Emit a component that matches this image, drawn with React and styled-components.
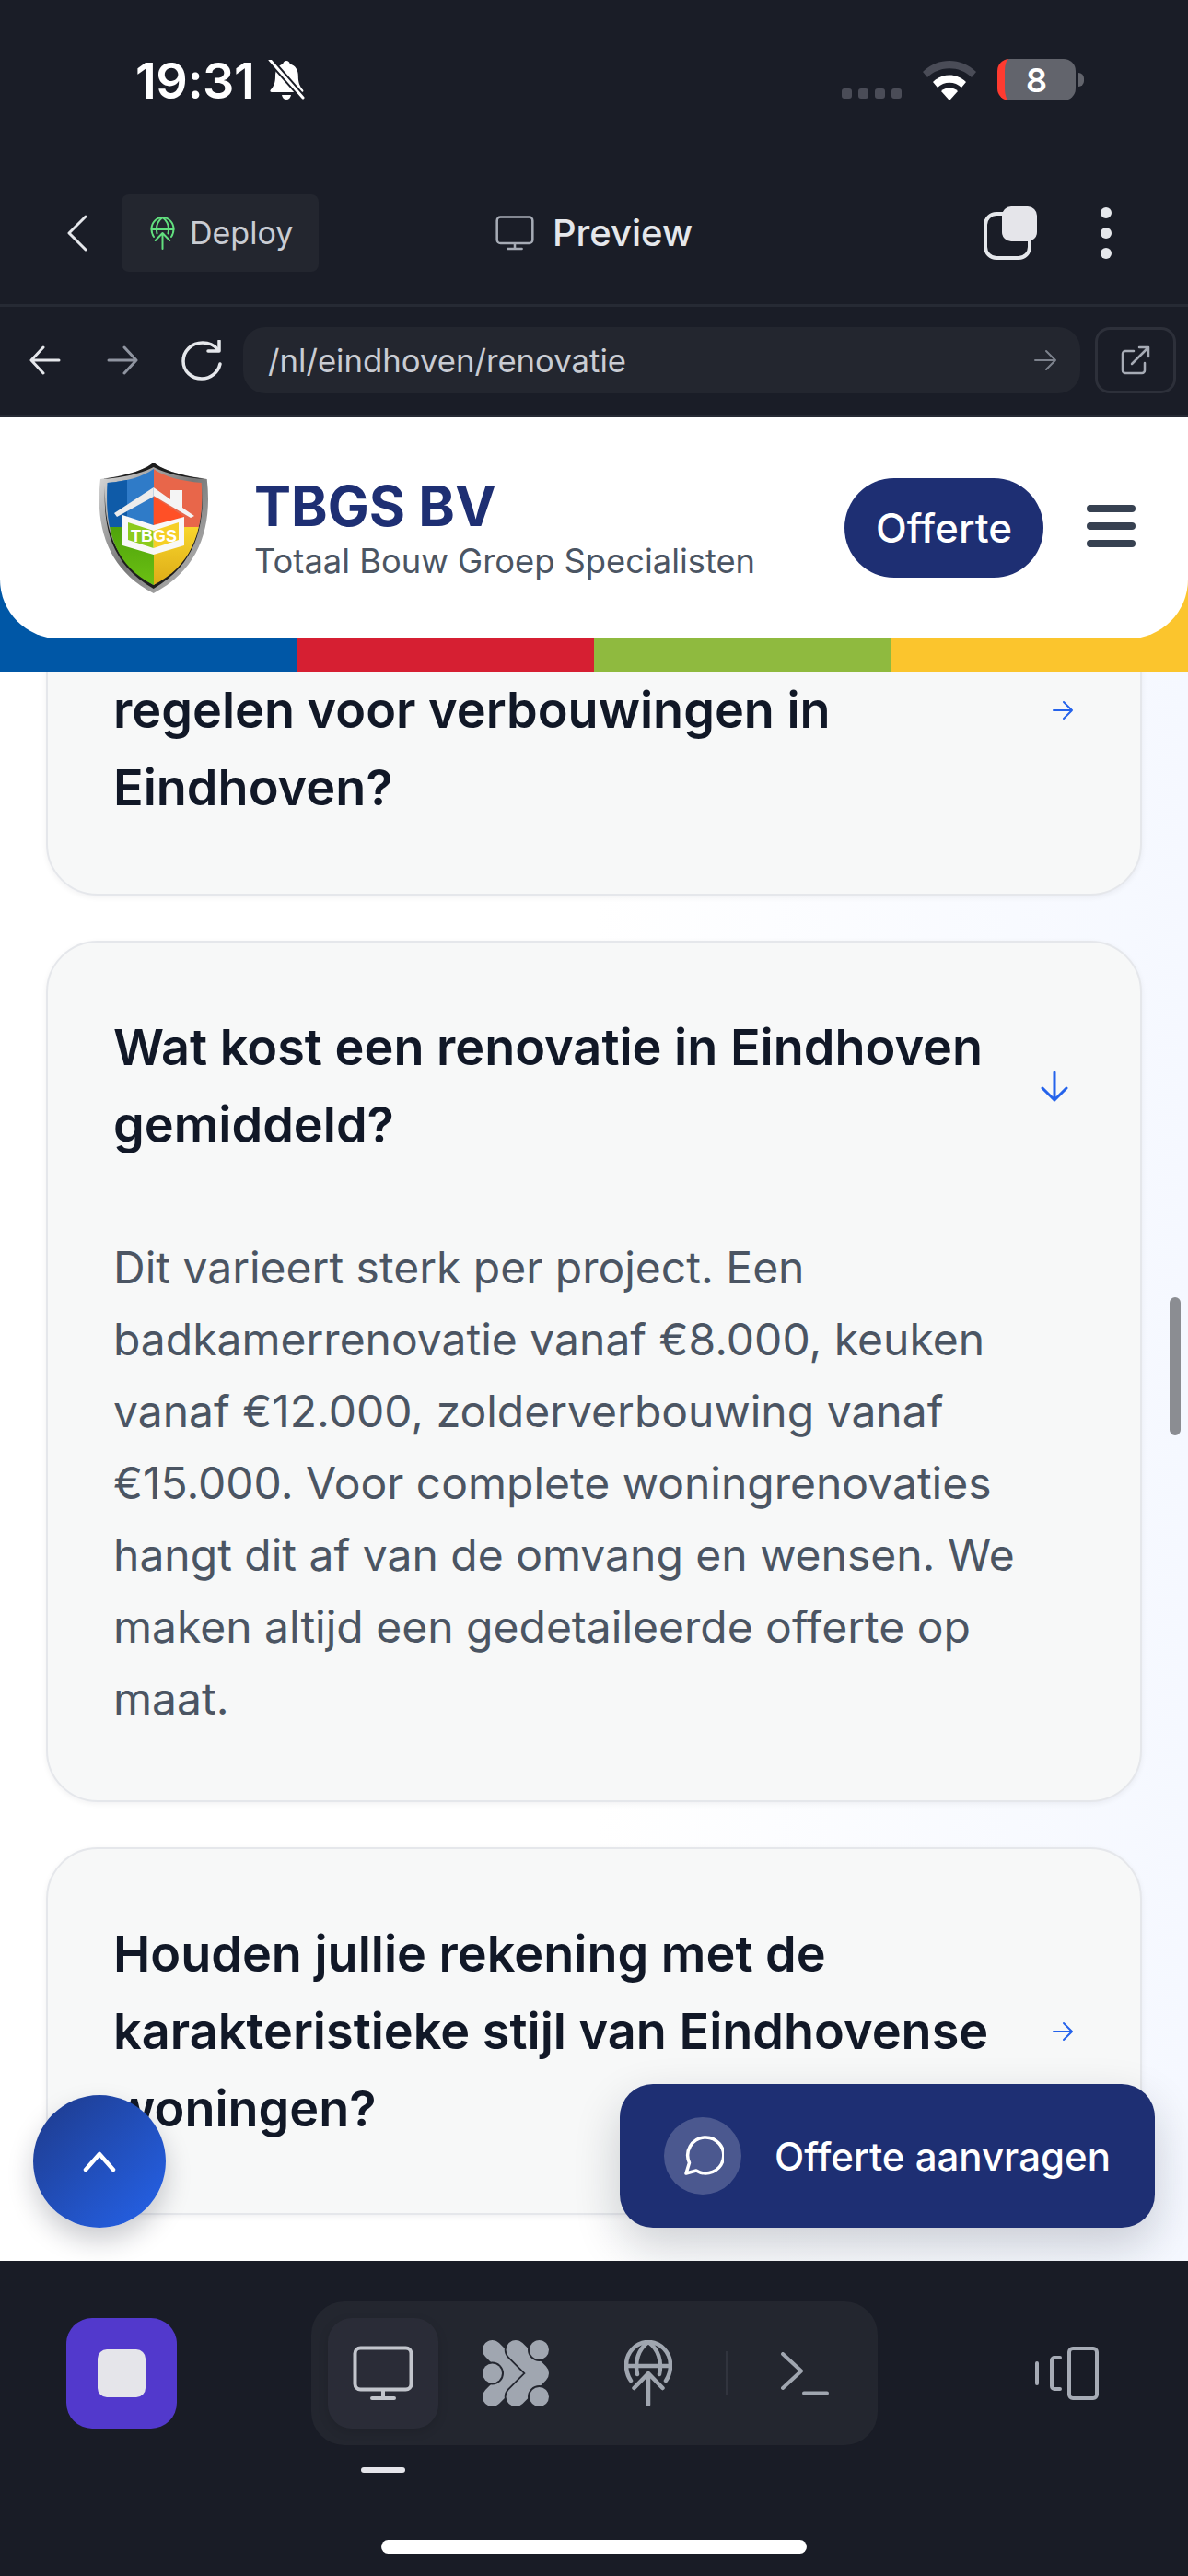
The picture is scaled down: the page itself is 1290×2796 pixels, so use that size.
import React from 'react';
import styled, { createGlobalStyle } from 'styled-components';

const GlobalStyle = createGlobalStyle`
    html, body {
        margin: 0;
        padding: 0;
        background: #1a1d27;
    }
    * {
        box-sizing: border-box;
    }
`

const BellOff = () => (
    <svg width="42" height="44" viewBox="1 1 40 44">
        <path d="M21 2c2 0 3.500 1.500 3.800 3.500 6 1.500 9 6.500 9 13 0 7 1.500 11 5.200 15 1 1.200.2 2.500-1.200 2.500H5c-1.400 0-2.200-1.300-1.200-2.500 3.700-4 5.200-8 5.200-15 0-6.500 3-11.500 8.200-13C17.500 3.500 19 2 21 2z" fill="#fff" />
        <path d="M16 39h10c-.5 3-2.500 5-5 5s-4.500-2-5-5z" fill="#fff" />
        <path d="M3 1l36 41" stroke="#1a1d27" strokeWidth="7" />
        <path d="M3 1l36 41" stroke="#fff" strokeWidth="3" strokeLinecap="round" />
    </svg>
)

const Wifi = () => (
    <svg width="58" height="44" viewBox="0 0 58 44">
        <path d="M0 13C16-3 42-3 58 13l-5 6C40 6 18 6 5 19z" fill="#4a4c57" />
        <path d="M11 24c10-10 26-10 36 0l-5 6c-7-7-19-7-26 0z" fill="#fff" />
        <path d="M20 34c5-5 13-5 18 0l-9 10z" fill="#fff" />
    </svg>
)

const GlobeUp = ({ w, h, color, width }) => (
    <svg width={w} height={h} viewBox="0 0 52 72" fill="none" stroke={color} strokeWidth={width} strokeLinecap="round" strokeLinejoin="round">
        <path d="M7 44C3.500 39 2 33 2 27 2 13 13 2 26 2s24 11 24 25c0 6-1.500 12-5 17" />
        <path d="M14 37C11 23 15 10 26 2c11 8 15 21 12 35" />
        <path d="M2 28h48" />
        <path d="M26 38v32M10.500 52L26 36l15.500 16" />
    </svg>
)

const Monitor = ({ w, h, color, width }) => (
    <svg width={w} height={h} viewBox="0 0 66 60" fill="none" stroke={color} strokeWidth={width} strokeLinecap="round" strokeLinejoin="round">
        <rect x="2.500" y="2.500" width="61" height="45" rx="6" />
        <path d="M33 48v9M21 57h24" />
    </svg>
)

// two chevron bands, the loose blobs sit on top with a halo in the panel colour
const Network = () => (
    <svg width="72" height="72" viewBox="0 0 72 72" fill="#a0a6b0" strokeLinecap="round" strokeLinejoin="round">
        <path d="M10.500 10.500L36 36 10.500 61.500" fill="none" stroke="#a0a6b0" strokeWidth="21" />
        <path d="M36 10.500L61.500 36 36 61.500" fill="none" stroke="#23262f" strokeWidth="24.500" />
        <path d="M36 10.500L61.500 36 36 61.500" fill="none" stroke="#a0a6b0" strokeWidth="21" />
        <circle cx="10.500" cy="36" r="10.500" stroke="#23262f" strokeWidth="4" paintOrder="stroke" />
        <circle cx="61.500" cy="10.500" r="10.500" stroke="#23262f" strokeWidth="4" paintOrder="stroke" />
        <circle cx="61.500" cy="61.500" r="10.500" stroke="#23262f" strokeWidth="4" paintOrder="stroke" />
    </svg>
)

const Shield = () => (
    <svg width="118" height="142" viewBox="0 0 118 142">
        <defs>
            <linearGradient id="rim" x1="0" y1="0" x2="1" y2="1">
                <stop offset="0" stopColor="#e2e2e2" />
                <stop offset="0.5" stopColor="#777" />
                <stop offset="1" stopColor="#c4c4c4" />
            </linearGradient>
            <linearGradient id="sun" x1="0" y1="0" x2="0" y2="1">
                <stop offset="0" stopColor="#f8d62c" />
                <stop offset="1" stopColor="#d9a514" />
            </linearGradient>
            <linearGradient id="leaf" x1="0" y1="0" x2="0" y2="1">
                <stop offset="0" stopColor="#4fa30b" />
                <stop offset="1" stopColor="#6fc414" />
            </linearGradient>
            <clipPath id="inner">
                <path d="M58.700 7c13 9 30 13 52 15 3 45-6 88-52 111C13 110 6 67 8.700 22c22-2 37-6 50-15z" />
            </clipPath>
        </defs>
        <path d="M58.700 0c13 10 32 14 58 18 6 52-8 98-58 124C9 116-5 70 1 18 27 14 46 10 58.700 0z" fill="url(#rim)" />
        <path d="M58.700 0c13 10 32 14 55 18-24-2-42-6-55-13-13 7-31 11-55 13C27 14 46 10 58.700 0z" fill="#1d1d1d" />
        <path d="M6 26c-2 44 6 84 52.700 111 46-27 55-67 53-111 1 44-8 80-53 107C14 106 5 70 6 26z" fill="#1d1d1d" />
        <g clipPath="url(#inner)">
            <rect x="0" y="0" width="59" height="70" fill="#2f7bc8" />
            <rect x="0" y="0" width="30" height="70" fill="#0f5ba8" />
            <rect x="59" y="0" width="59" height="70" fill="#e8664a" />
            <rect x="0" y="70" width="59" height="72" fill="url(#leaf)" />
            <rect x="59" y="70" width="59" height="72" fill="url(#sun)" />
        </g>
        <path d="M58.700 27L77 40V30h13v19l13 9-4 2-40.300-24z" fill="#f4f4f4" />
        <path d="M58.700 27v10L19 59l-3-4z" fill="#ececec" />
        <path d="M58.700 37L92 59 58.700 68z" fill="#ff5026" />
        <path d="M25 57l33.700 11L92 59v31l-33.300 10L25 90z" fill="#f8f8f8" />
        <path d="M31 65l27.700 9v19L31 84z" fill="#8ccb1d" />
        <path d="M58.700 74L86 65v19l-27.300 9z" fill="#f6cf27" />
        <text x="59" y="86" textAnchor="middle" fontFamily="Liberation Sans, sans-serif" fontWeight="700" fontSize="19" fill="#fff" textLength="50" lengthAdjust="spacingAndGlyphs">TBGS</text>
    </svg>
)

const Thin = ({ w, h, color, stroke, d }) => (
    <svg width={w} height={h} viewBox={`0 0 ${w} ${h}`} fill="none" stroke={color} strokeWidth={stroke} strokeLinecap="round" strokeLinejoin="round">
        <path d={d} />
    </svg>
)

const App = () => {
    return (
        <Page>
            <GlobalStyle />
            <StatusBar>
                <Clock>
                    <Time>19:31</Time>
                    <BellOff />
                </Clock>
                <StatusRight>
                    <Signal>
                        <SignalDot /><SignalDot /><SignalDot /><SignalDot />
                    </Signal>
                    <Wifi />
                    <Battery>
                        <BatteryBody>8</BatteryBody>
                        <BatteryNub />
                    </Battery>
                </StatusRight>
            </StatusBar>

            <TopBar>
                <TopLeft>
                    <Thin w={24} h={40} color="#e5e7eb" stroke={3} d="M21 2L3 20l18 18" />
                    <DeployChip>
                        <GlobeUp w={27} h={36} color="#62e07f" width={4} />
                        <DeployLabel>Deploy</DeployLabel>
                    </DeployChip>
                </TopLeft>
                <TopCenter>
                    <Monitor w={42} h={38} color="#a6abb5" width={4} />
                    <PreviewLabel>Preview</PreviewLabel>
                </TopCenter>
                <TopRight>
                    <Tabs>
                        <TabBack />
                        <TabFront />
                    </Tabs>
                    <MoreDots>
                        <MoreDot /><MoreDot /><MoreDot />
                    </MoreDots>
                </TopRight>
            </TopBar>

            <UrlBar>
                <Thin w={34} h={32} color="#e5e7eb" stroke={3} d="M32 16H3M15 2L2 16l13 14" />
                <ForwardSlot>
                    <Thin w={34} h={32} color="#8f94a0" stroke={3} d="M2 16h29M19 2l13 14-13 14" />
                </ForwardSlot>
                <ReloadSlot>
                    <svg width="46" height="44" viewBox="0 0 46 44" fill="none" stroke="#e5e7eb" strokeWidth="3.500" strokeLinecap="round" strokeLinejoin="round">
                        <path d="M40 10C36 5 30 3 24 3 12 3 3 12 3 23s9 19 20 19c10 0 18-7 20-16" />
                        <path d="M42 1v11H30" />
                    </svg>
                </ReloadSlot>
                <UrlPill>
                    <UrlText>/nl/eindhoven/renovatie</UrlText>
                    <Thin w={26} h={24} color="#7d828d" stroke={2} d="M2 12h22M14 2l10 10-10 10" />
                </UrlPill>
                <OpenButton>
                    <svg width="32" height="32" viewBox="0 0 32 32" fill="none" stroke="#a6abb5" strokeWidth="2.500" strokeLinecap="round" strokeLinejoin="round">
                        <path d="M14 6H5a3 3 0 0 0-3 3v18a3 3 0 0 0 3 3h18a3 3 0 0 0 3-3v-8" />
                        <path d="M12 20L30 2M20 2h10v10" />
                    </svg>
                </OpenButton>
            </UrlBar>

            <SiteHeader>
                <SiteHeaderInner>
                    <Brand>
                        <Shield />
                        <BrandText>
                            <BrandName>TBGS BV</BrandName>
                            <BrandSub>Totaal Bouw Groep Specialisten</BrandSub>
                        </BrandText>
                    </Brand>
                    <HeaderActions>
                        <QuoteButton>Offerte</QuoteButton>
                        <Burger>
                            <BurgerBar /><BurgerBar /><BurgerBar />
                        </Burger>
                    </HeaderActions>
                </SiteHeaderInner>
            </SiteHeader>

            <Content>
                <FaqList>
                    <FaqCard $bottom={73}>
                        <FaqRow>
                            <FaqTitle>{'\u00a0'}<br />regelen voor verbouwingen in<br />Eindhoven?</FaqTitle>
                            <Thin w={24} h={22} color="#2563eb" stroke={2} d="M2 11h20M13 2l9 9-9 9" />
                        </FaqRow>
                    </FaqCard>
                    <FaqCard>
                        <FaqRow>
                            <FaqTitle>Wat kost een renovatie in Eindhoven gemiddeld?</FaqTitle>
                            <DownSlot>
                                <Thin w={32} h={34} color="#2563eb" stroke={3} d="M16 2v30M3 19l13 13 13-13" />
                            </DownSlot>
                        </FaqRow>
                        <FaqBody>Dit varieert sterk per project. Een badkamerrenovatie vanaf €8.000, keuken vanaf €12.000, zolderverbouwing vanaf €15.000. Voor complete woningrenovaties hangt dit af van de omvang en wensen. We maken altijd een gedetaileerde offerte op maat.</FaqBody>
                    </FaqCard>
                    <FaqCard>
                        <FaqRow>
                            <FaqTitle>Houden jullie rekening met de karakteristieke stijl van Eindhovense woningen?</FaqTitle>
                            <Thin w={24} h={22} color="#2563eb" stroke={2} d="M2 11h20M13 2l9 9-9 9" />
                        </FaqRow>
                    </FaqCard>
                </FaqList>
                <ScrollThumb />
                <ScrollTop>
                    <Thin w={36} h={24} color="#fff" stroke={4.500} d="M3 21L18 4l15 17" />
                </ScrollTop>
                <ChatButton>
                    <ChatIcon>
                        <svg width="46" height="46" viewBox="0 0 46 46" fill="none" stroke="#fff" strokeWidth="3.500" strokeLinecap="round" strokeLinejoin="round">
                            <path d="M8.500 30.500L5 42l11-3A19.500 19.500 0 1 0 8.500 30.500z" />
                        </svg>
                    </ChatIcon>
                    <ChatLabel>Offerte aanvragen</ChatLabel>
                </ChatButton>
            </Content>

            <BottomBar>
                <BottomRow>
                    <StopButton><StopSquare /></StopButton>
                    <ToolGroup>
                        <ToolItem $active><Monitor w={66} h={60} color="#c2c5cc" width={4} /></ToolItem>
                        <ToolItem><Network /></ToolItem>
                        <ToolItem><GlobeUp w={52} h={72} color="#a0a6b0" width={4.500} /></ToolItem>
                        <ToolDivider />
                        <ToolItem>
                            <Thin w={52} h={47} color="#a0a6b0" stroke={4} d="M2 2l20 18.500L2 39M25 44.500h25" />
                        </ToolItem>
                    </ToolGroup>
                    <DeviceToggle>
                        <svg width="70" height="58" viewBox="0 0 70 58" fill="none" stroke="#a6abb5" strokeWidth="4" strokeLinecap="round" strokeLinejoin="round">
                            <rect x="38" y="2" width="30" height="54" rx="4" />
                            <path d="M28 12h-6a3 3 0 0 0-3 3v28a3 3 0 0 0 3 3h6M3 18v22" />
                        </svg>
                    </DeviceToggle>
                </BottomRow>
                <TabIndicator />
                <HomeBar />
            </BottomBar>
        </Page>
    )
}

// styling using the styled components
const Page = styled.div`
    width: 1290px;
    height: 2796px;
    overflow: hidden;
    display: flex;
    flex-direction: column;
    background: #1a1d27;
    font-family: Inter, "Liberation Sans", sans-serif;
`
const StatusBar = styled.div`
    height: 178px;
    flex: none;
    display: flex;
    justify-content: space-between;
    align-items: flex-start;
    padding: 63px 113px 0 147px;
`
const Clock = styled.div`
    display: flex;
    align-items: center;
    gap: 14px;
    height: 48px;
`
const Time = styled.span`
    font-size: 54px;
    font-weight: 600;
    letter-spacing: -0.500px;
    color: #fff;
`
const StatusRight = styled.div`
    display: flex;
    align-items: flex-end;
    height: 46px;
`
const Signal = styled.div`
    display: flex;
    gap: 7px;
    margin-right: 23px;
    padding-bottom: 2px;
`
const SignalDot = styled.span`
    width: 11px;
    height: 11px;
    border-radius: 3px;
    background: #4a4c57;
`
const Battery = styled.div`
    display: flex;
    align-items: center;
    margin-left: 23px;
    height: 45px;
    margin-bottom: 0;
`
const BatteryBody = styled.div`
    width: 85px;
    height: 45px;
    border-radius: 13px;
    border-left: 8px solid #ff3b30;
    background: #62646c;
    color: #fff;
    font-size: 36px;
    font-weight: 600;
    display: flex;
    align-items: center;
    justify-content: center;
    padding-right: 8px;
`
const BatteryNub = styled.span`
    width: 6px;
    height: 15px;
    margin-left: 3px;
    border-radius: 0 6px 6px 0;
    background: #62646c;
`
const TopBar = styled.div`
    height: 155px;
    flex: none;
    display: grid;
    grid-template-columns: 1fr auto 1fr;
    align-items: center;
    padding: 0 83px 3px 72px;
    border-bottom: 3px solid #262a34;
`
const TopLeft = styled.div`
    display: flex;
    align-items: center;
    gap: 36px;
`
const DeployChip = styled.div`
    width: 214px;
    height: 84px;
    border-radius: 8px;
    background: #23262f;
    display: flex;
    align-items: center;
    gap: 16px;
    padding-left: 31px;
`
const DeployLabel = styled.span`
    font-size: 34px;
    color: #c9ccd3;
`
const TopCenter = styled.div`
    display: flex;
    align-items: center;
    gap: 20px;
    margin-left: 11px;
`
const PreviewLabel = styled.span`
    font-size: 40px;
    font-weight: 500;
    color: #e5e7eb;
`
const TopRight = styled.div`
    display: flex;
    align-items: center;
    justify-content: flex-end;
    gap: 69px;
`
const Tabs = styled.div`
    position: relative;
    width: 58px;
    height: 58px;
`
const TabBack = styled.span`
    position: absolute;
    left: 0;
    bottom: 0;
    width: 52px;
    height: 52px;
    border: 4px solid #e5e7eb;
    border-radius: 14px;
`
const TabFront = styled.span`
    position: absolute;
    right: 0;
    top: 0;
    width: 38px;
    height: 38px;
    border-radius: 10px;
    background: #e5e5ea;
`
const MoreDots = styled.div`
    display: flex;
    flex-direction: column;
    gap: 10px;
`
const MoreDot = styled.span`
    width: 12px;
    height: 12px;
    border-radius: 50%;
    background: #e5e7eb;
`
const UrlBar = styled.div`
    height: 120px;
    flex: none;
    display: flex;
    align-items: center;
    padding: 0 13px 1px 32px;
    border-bottom: 3px solid #262a34;
`
const ForwardSlot = styled.div`
    margin-left: 50px;
    display: flex;
`
const ReloadSlot = styled.div`
    margin-left: 46px;
    display: flex;
`
const UrlPill = styled.div`
    width: 909px;
    height: 72px;
    margin-left: 22px;
    border-radius: 24px;
    background: #23262f;
    display: flex;
    align-items: center;
    justify-content: space-between;
    padding: 0 25px 0 27px;
`
const UrlText = styled.span`
    font-size: 34.700px;
    color: #c9ccd3;
`
const OpenButton = styled.div`
    width: 88px;
    height: 72px;
    margin-left: 16px;
    border: 3px solid #2d303a;
    border-radius: 16px;
    display: flex;
    align-items: center;
    justify-content: center;
`
const SiteHeader = styled.header`
    flex: none;
    padding-bottom: 36px;
    background: linear-gradient(90deg, #0057a6 25%, #d61f32 25% 50%, #8fba3f 50% 75%, #fbc52d 75%);
`
const SiteHeaderInner = styled.div`
    height: 240px;
    background: #fff;
    border-radius: 0 0 64px 64px;
    display: flex;
    align-items: center;
    justify-content: space-between;
    padding: 0 57px 0 108px;
`
const Brand = styled.div`
    display: flex;
    align-items: center;
    gap: 50px;
`
const BrandText = styled.div`
    display: flex;
    flex-direction: column;
`
const BrandName = styled.div`
    font-size: 60px;
    line-height: 72px;
    font-weight: 700;
    color: #1e2f73;
`
const BrandSub = styled.div`
    font-size: 36.300px;
    line-height: 48px;
    color: #4b5563;
`
const HeaderActions = styled.div`
    display: flex;
    align-items: center;
    gap: 47px;
`
const QuoteButton = styled.div`
    width: 216px;
    height: 108px;
    border-radius: 54px;
    background: #1e2f73;
    color: #fff;
    font-size: 44px;
    font-weight: 500;
    display: flex;
    align-items: center;
    justify-content: center;
`
const Burger = styled.div`
    display: flex;
    flex-direction: column;
    gap: 11px;
    margin-bottom: 4px;
`
const BurgerBar = styled.span`
    width: 53px;
    height: 8px;
    border-radius: 4px;
    background: #374151;
`
const Content = styled.main`
    position: relative;
    height: 1725px;
    flex: none;
    overflow: hidden;
    background: linear-gradient(90deg, #fff 50%, #f5f8ff 100%);
`
const FaqList = styled.div`
    display: flex;
    flex-direction: column;
    gap: 49px;
    padding: 0 50px;
    margin-top: -158px;
`
const FaqCard = styled.section`
    padding: 72px 72px ${props => props.$bottom || 71}px 71px;
    border: 2px solid #e5e7eb;
    border-radius: 56px;
    background: #f7f8f8;
    box-shadow: 0 2px 6px rgba(17, 24, 39, 0.06);
`
const FaqRow = styled.div`
    display: flex;
    align-items: center;
    justify-content: space-between;
    gap: 40px;
`
const FaqTitle = styled.h3`
    flex: 1;
    margin: 0;
    font-size: 54px;
    line-height: 84px;
    font-weight: 600;
    color: #111827;
`
const DownSlot = styled.div`
    display: flex;
    margin-right: 5px;
`
const FaqBody = styled.p`
    margin: 74px 0 0;
    font-size: 48px;
    line-height: 78px;
    color: #4b5563;
`
const ScrollThumb = styled.div`
    position: absolute;
    right: 8px;
    top: 679px;
    width: 12px;
    height: 150px;
    border-radius: 6px;
    background: #8b8d92;
`
const ScrollTop = styled.div`
    position: absolute;
    left: 36px;
    top: 1545px;
    width: 144px;
    height: 144px;
    border-radius: 50%;
    background: linear-gradient(135deg, #1e3a8a, #2563eb);
    box-shadow: 0 14px 28px rgba(17, 24, 39, 0.22);
    display: flex;
    align-items: center;
    justify-content: center;
`
const ChatButton = styled.div`
    position: absolute;
    left: 673px;
    top: 1533px;
    width: 581px;
    height: 156px;
    border-radius: 36px;
    background: #1e2f73;
    box-shadow: 0 20px 50px rgba(17, 24, 39, 0.2);
    display: flex;
    align-items: center;
    gap: 36px;
    padding-left: 48px;
`
const ChatIcon = styled.div`
    width: 84px;
    height: 84px;
    border-radius: 50%;
    background: rgba(255, 255, 255, 0.2);
    display: flex;
    align-items: center;
    justify-content: center;
`
const ChatLabel = styled.span`
    font-size: 42px;
    font-weight: 500;
    color: #fff;
`
const BottomBar = styled.div`
    flex: 1;
    padding-top: 44px;
    background: #191c26;
    display: flex;
    flex-direction: column;
`
const BottomRow = styled.div`
    display: flex;
    align-items: center;
    padding-left: 72px;
`
const StopButton = styled.div`
    width: 120px;
    height: 120px;
    border-radius: 28px;
    background: #5239cc;
    display: flex;
    align-items: center;
    justify-content: center;
`
const StopSquare = styled.span`
    width: 52px;
    height: 52px;
    border-radius: 10px;
    background: #e5e5ea;
`
const ToolGroup = styled.div`
    width: 615px;
    height: 156px;
    margin-left: 146px;
    padding: 18px;
    border-radius: 36px;
    background: #23262f;
    display: flex;
    align-items: center;
    gap: 24px;
`
const ToolItem = styled.div`
    width: 120px;
    height: 120px;
    border-radius: 26px;
    background: ${props => props.$active ? '#2a2c37' : 'transparent'};
    box-shadow: ${props => props.$active ? '0 4px 12px rgba(0, 0, 0, 0.12)' : 'none'};
    display: flex;
    align-items: center;
    justify-content: center;
`
const ToolDivider = styled.span`
    width: 2px;
    height: 48px;
    background: #31343e;
`
const DeviceToggle = styled.div`
    display: flex;
    margin-left: 170px;
`
const TabIndicator = styled.span`
    width: 48px;
    height: 6px;
    margin: 24px 0 0 392px;
    border-radius: 3px;
    background: #e5e5ea;
`
const HomeBar = styled.span`
    width: 462px;
    height: 15px;
    margin: 73px 0 0 414px;
    border-radius: 8px;
    background: #fff;
`

export default App;
